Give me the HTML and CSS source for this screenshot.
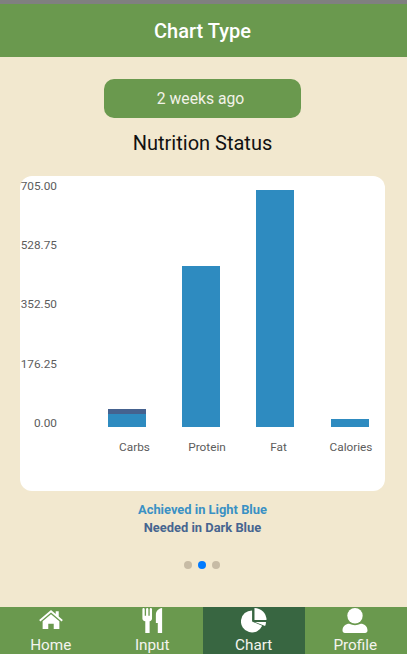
FILE: index.html
```html
<!DOCTYPE html>
<html lang="en">
<head>
<meta charset="utf-8">
<title>Chart Type</title>
<link rel="stylesheet" href="styles.css">
</head>
<body>
<div class="app">
  <header class="header">Chart Type</header>
  <main class="main">
    <button class="period">2 weeks ago</button>
    <h1 class="title">Nutrition Status</h1>
    <section class="card">
      <svg class="chart" width="365" height="315" viewBox="0 0 365 315">
        <g class="ylabels">
          <text x="37" y="14">705.00</text>
          <text x="37" y="73">528.75</text>
          <text x="37" y="132">352.50</text>
          <text x="37" y="192">176.25</text>
          <text x="37" y="251">0.00</text>
        </g>
        <rect class="bar" x="88" y="233" width="38" height="18"/>
        <rect class="need" x="88" y="233" width="38" height="5"/>
        <rect class="bar" x="162" y="90" width="38" height="161"/>
        <rect class="bar" x="236" y="14" width="38" height="237"/>
        <rect class="bar" x="311" y="243" width="38" height="8"/>
        <g class="xlabels">
          <text x="114.500" y="275">Carbs</text>
          <text x="187" y="275">Protein</text>
          <text x="258.500" y="275">Fat</text>
          <text x="331" y="275">Calories</text>
        </g>
      </svg>
    </section>
    <div class="legend">
      <p class="achieved">Achieved in Light Blue</p>
      <p class="needed">Needed in Dark Blue</p>
    </div>
    <div class="dots"><span class="dot"></span><span class="dot active"></span><span class="dot"></span></div>
  </main>
  <nav class="nav">
    <a class="tab">
      <svg class="icon" width="26" height="22" viewBox="0 0 26 22"><path d="M13 0 0 11l1.300 1.600L13 2.700l11.700 9.900L26 11l-4.500-3.800V1.500h-3.300v2.900z"/><path d="M13 4.700 3.800 12.400V21h6.200v-6h6v6h6.200v-8.600z"/></svg>
      <span>Home</span>
    </a>
    <a class="tab">
      <svg class="icon" width="21" height="26" viewBox="0 0 21 26"><path d="M0 1.200a1.200 1.200 0 0 1 2.400 0V8h1.400V1.200a1.200 1.200 0 0 1 2.400 0V8h1.400V1.200a1.200 1.200 0 0 1 2.400 0v9.800c0 1.600-1 2.500-2.500 2.900V26H3V13.900C1 13.500 0 12.600 0 11z"/><path d="M14 15.500V7c0-3.500 2.500-6.300 6.500-7v26h-4.500V15.500z"/></svg>
      <span>Input</span>
    </a>
    <a class="tab current">
      <svg class="icon" width="26" height="26" viewBox="0 0 26 26"><path d="M11 2.500a11.500 11.500 0 1 0 10.500 16L11 14z"/><path d="M13.500 0v12.500H26A12.500 12.500 0 0 0 13.500 0z"/><path d="M14 14.500h11.500c0 1.600-.4 3-1 4.300z"/></svg>
      <span>Chart</span>
    </a>
    <a class="tab">
      <svg class="icon" width="26" height="26" viewBox="0 0 26 26"><circle cx="13" cy="8" r="8"/><path d="M0 23.500c0-4.500 3.500-7 7-7 2 1 4 1.500 6 1.500s4-.5 6-1.500c3.500 0 7 2.500 7 7 0 1.500-1 2.500-2.500 2.500h-21C1 26 0 25 0 23.500z"/></svg>
      <span>Profile</span>
    </a>
  </nav>
</div>
</body>
</html>
```
FILE: styles.css
```css
* { box-sizing: border-box; }
html, body { margin: 0; padding: 0; }
body { font-family: Roboto, "Liberation Sans", sans-serif; }
.app {
  width: 407px;
  height: 654px;
  display: flex;
  flex-direction: column;
  background: #f2e8cf;
  border-top: 4px solid #808080;
  overflow: hidden;
}
.header {
  height: 53px;
  flex: none;
  padding-right: 2px;
  background: #6a994e;
  color: #fff;
  font-size: 20px;
  font-weight: 500;
  display: flex;
  align-items: center;
  justify-content: center;
}
.main {
  flex: 1;
  display: flex;
  flex-direction: column;
  align-items: center;
  padding: 22px 2px 0 0;
}
.period {
  width: 197px;
  height: 39px;
  border: 0;
  border-radius: 10px;
  background: #6a994e;
  color: #f2f2e8;
  font: 400 15.700px Roboto, sans-serif;
  padding: 0 4px 0 0;
}
.title {
  margin: 13px 0 0;
  height: 24px;
  line-height: 24px;
  font-size: 20px;
  font-weight: 400;
  color: #111;
}
.card {
  width: 365px;
  height: 315px;
  margin-top: 21px;
  background: #fff;
  border-radius: 12px;
}
.chart { display: block; }
.chart text { font-family: Roboto, sans-serif; font-size: 11.800px; fill: #5c5c5c; }
.ylabels text { text-anchor: end; }
.xlabels text { text-anchor: middle; }
.bar { fill: #2e8bc0; }
.need { fill: #45628f; }
.legend {
  margin-top: 10px;
  text-align: center;
  font-size: 12.900px;
  font-weight: 700;
  line-height: 17.500px;
}
.legend p { margin: 0; }
.achieved { color: #3a91c4; }
.needed { color: #466590; }
.dots {
  display: flex;
  gap: 6px;
  margin: 25px 1px 0 0;
}
.dot {
  width: 8px;
  height: 8px;
  border-radius: 50%;
  background: #c7bba5;
}
.dot.active { background: #007aff; }
.nav {
  height: 47px;
  flex: none;
  display: grid;
  grid-template-columns: repeat(4, 1fr);
  padding-right: 1px;
  background: #6a994e;
}
.tab {
  display: flex;
  flex-direction: column;
  align-items: center;
  justify-content: flex-start;
  color: #f4f4ee;
  font-size: 15.300px;
  line-height: 18px;
  overflow: hidden;
}
.tab span { display: block; margin-top: 3px; }
.tab .icon { display: block; fill: #fff; margin-top: 1px; height: 26px; }
.tab:first-child .icon { margin-top: 3px; height: 21px; margin-bottom: 3px; }
.tab.current { background: #386641; }
```
